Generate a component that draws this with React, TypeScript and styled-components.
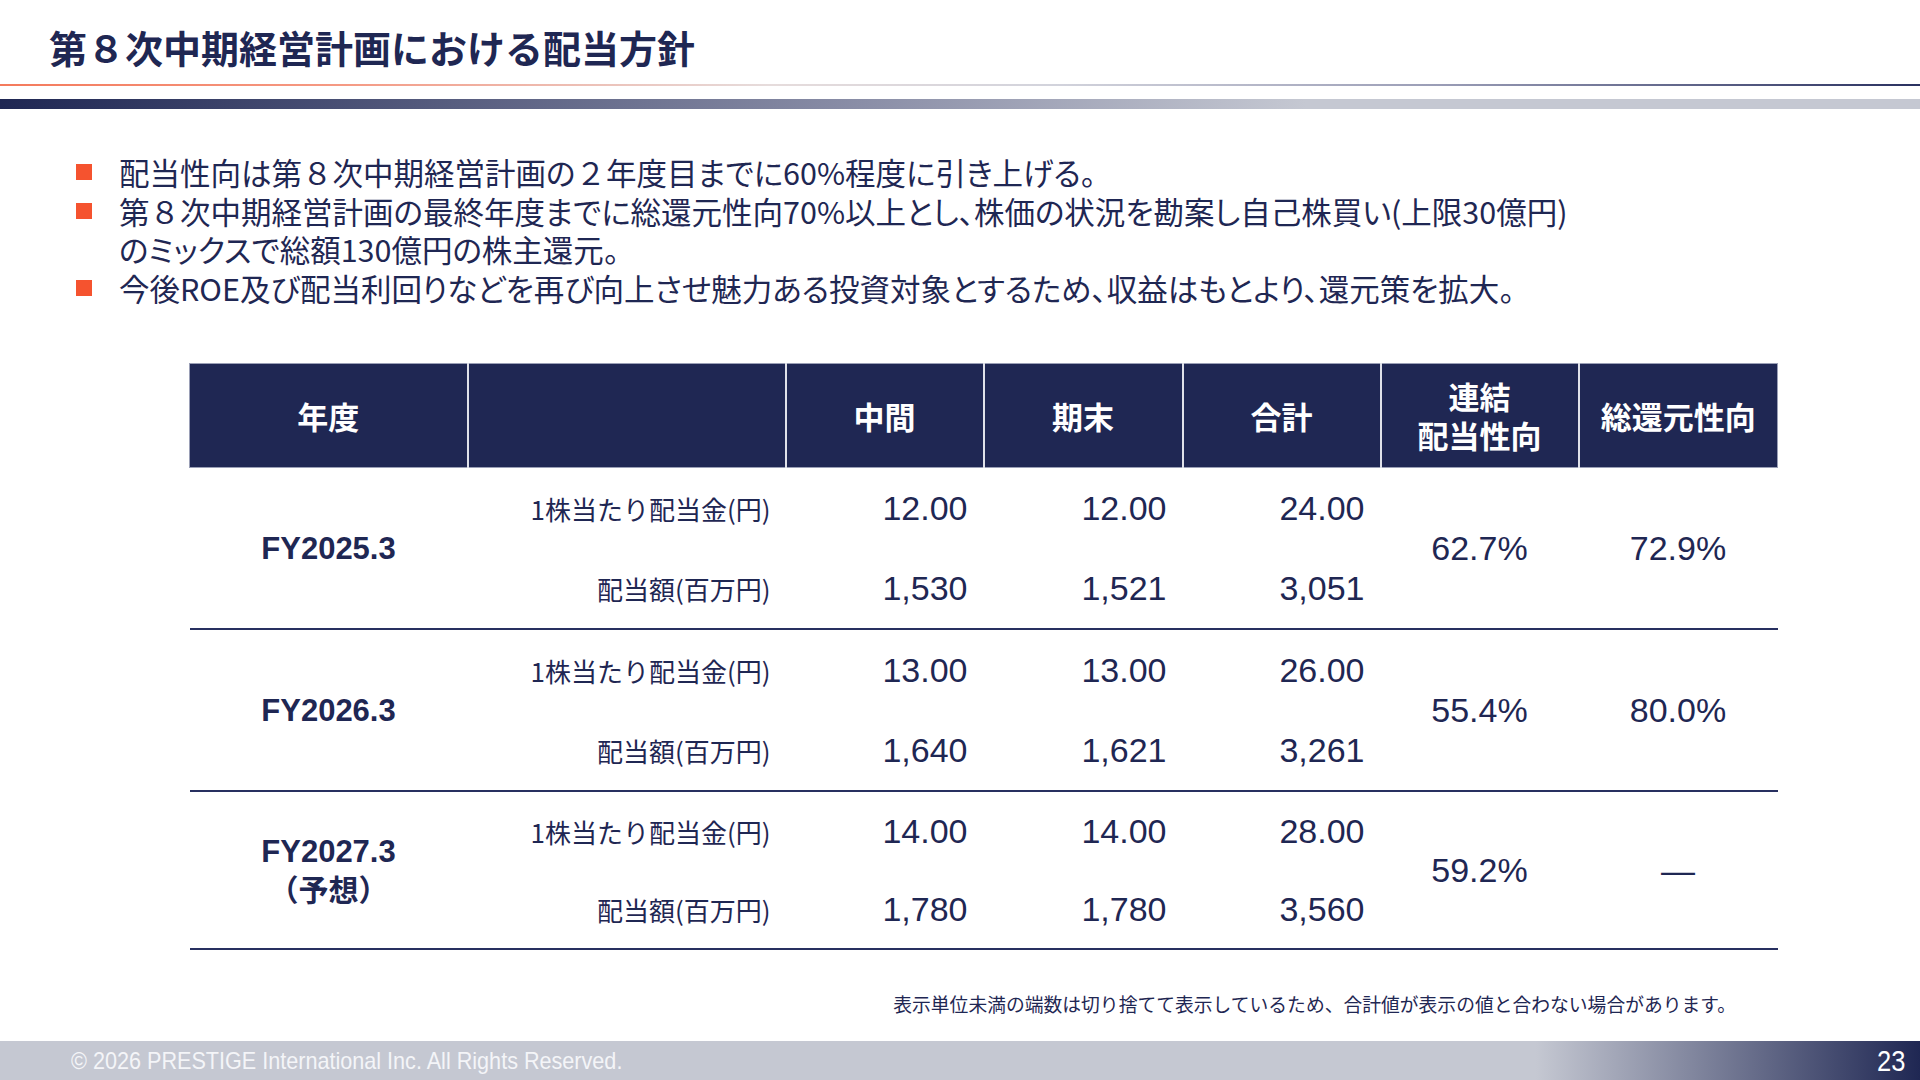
import React from "react";
import styled, { createGlobalStyle } from "styled-components";

const GlobalStyle = createGlobalStyle`
  html, body { margin: 0; padding: 0; background: #ffffff; }
  body { font-family: "Noto Sans CJK JP", "Noto Sans", sans-serif; }
  * { box-sizing: border-box; }
`;

const NAVY = "#1f2753";
const CJK = `"Noto Sans CJK JP", "Noto Sans", sans-serif`;
const LATIN = `"Liberation Sans", Arial, "Noto Sans CJK JP", sans-serif`;

const Page = styled.div`
  width: 1920px;
  height: 1080px;
  display: flex;
  flex-direction: column;
  background: #ffffff;
  overflow: hidden;
`;

const Header = styled.header`
  height: 84px;
  display: flex;
  align-items: center;
  padding: 10px 0 0 49px;
`;

const Title = styled.h1`
  margin: 0;
  font-family: ${CJK};
  font-weight: 700;
  font-size: 38px;
  line-height: 1;
  color: ${NAVY};
`;

const ThinRule = styled.div`
  height: 2px;
  background: linear-gradient(
    90deg,
    #f47a5c 0%,
    #f59a84 18%,
    #e6dcdc 40%,
    #d2d3dc 55%,
    #9a9db6 75%,
    #2a3160 100%
  );
`;

const Band = styled.div`
  height: 10px;
  margin-top: 13px;
  background: linear-gradient(90deg, ${NAVY} 0%, #8a8ea7 45%, #c5c8d2 68%, #c5c8d2 100%);
`;

const BulletList = styled.ul`
  list-style: none;
  margin: 44px 0 0 0;
  padding: 0 0 0 76px;
`;

const BulletItem = styled.li`
  display: grid;
  grid-template-columns: 43px 1fr;
  font-family: ${CJK};
  font-size: 30.5px;
  line-height: 38.7px;
  color: ${NAVY};
  font-feature-settings: "palt" 1;
`;

const WideDigit = styled.span`
  font-feature-settings: normal;
`;

const Square = styled.span`
  width: 16px;
  height: 16px;
  margin-top: 11px;
  background: #f5532f;
`;

const Table = styled.table`
  border-collapse: collapse;
  table-layout: fixed;
  width: 1588px;
  margin: 55px 0 0 189px;
`;

const HeadCell = styled.th`
  height: 104px;
  padding: 0;
  background: ${NAVY};
  color: #ffffff;
  font-family: ${CJK};
  font-weight: 700;
  font-size: 31px;
  line-height: 39px;
  text-align: center;
  vertical-align: middle;
  border: 1px solid #9a9fb6;
  & + & {
    border-left: 2px solid #dfe1e9;
  }
`;

const Group = styled.tbody`
  border-bottom: 2px solid #283060;
`;

const Row = styled.tr<{ $h: number }>`
  height: ${(p) => p.$h}px;
`;

const YearCell = styled.td`
  padding: 0;
  text-align: center;
  vertical-align: middle;
  font-family: ${LATIN};
  font-weight: 700;
  font-size: 31px;
  line-height: 37px;
  color: ${NAVY};
`;

const Forecast = styled.span`
  display: block;
  font-family: ${CJK};
  font-weight: 700;
  font-size: 30px;
`;

const LabelCell = styled.td`
  padding: 0 15px 0 0;
  text-align: right;
  vertical-align: middle;
  font-family: ${CJK};
  font-size: 26px;
  color: ${NAVY};
  white-space: nowrap;
`;

const NumCell = styled.td`
  padding: 0 16px 0 0;
  text-align: right;
  vertical-align: middle;
  font-family: ${LATIN};
  font-size: 34px;
  color: ${NAVY};
`;

const RatioCell = styled.td`
  padding: 0;
  text-align: center;
  vertical-align: middle;
  font-family: ${LATIN};
  font-size: 34px;
  color: ${NAVY};
`;

const Note = styled.p`
  width: 1588px;
  margin: 42px 0 0 189px;
  padding-right: 41px;
  text-align: right;
  font-family: ${CJK};
  font-size: 18.8px;
  line-height: 24px;
  color: ${NAVY};
`;

const Footer = styled.footer`
  margin-top: auto;
  height: 39px;
  display: flex;
  align-items: center;
  justify-content: space-between;
  padding: 0 15px 0 71px;
  background: linear-gradient(90deg, #c5c8d2 0%, #c5c8d2 80%, #1f2753 100%);
`;

const Copyright = styled.span`
  display: inline-block;
  font-family: ${LATIN};
  font-size: 24px;
  color: #f4f5f8;
  transform: scaleX(0.9);
  transform-origin: left center;
`;

const PageNo = styled.span`
  display: inline-block;
  font-family: ${LATIN};
  font-size: 30px;
  color: #ffffff;
  transform: scaleX(0.85);
  transform-origin: right center;
`;

type YearData = {
  year: string;
  forecast?: boolean;
  perShare: [string, string, string];
  total: [string, string, string];
  payout: string;
  totalReturn: string;
  h: number;
};

const data: YearData[] = [
  {
    year: "FY2025.3",
    perShare: ["12.00", "12.00", "24.00"],
    total: ["1,530", "1,521", "3,051"],
    payout: "62.7%",
    totalReturn: "72.9%",
    h: 81,
  },
  {
    year: "FY2026.3",
    perShare: ["13.00", "13.00", "26.00"],
    total: ["1,640", "1,621", "3,261"],
    payout: "55.4%",
    totalReturn: "80.0%",
    h: 81,
  },
  {
    year: "FY2027.3",
    forecast: true,
    perShare: ["14.00", "14.00", "28.00"],
    total: ["1,780", "1,780", "3,560"],
    payout: "59.2%",
    totalReturn: "—",
    h: 79,
  },
];

const colWidths = [278, 318, 198, 199, 198, 198, 199];

export default function App() {
  return (
    <>
      <GlobalStyle />
      <Page>
        <Header>
          <Title>第８次中期経営計画における配当方針</Title>
        </Header>
        <ThinRule />
        <Band />
        <BulletList>
          <BulletItem>
            <Square />
            <span>
              配当性向は第<WideDigit>８</WideDigit>次中期経営計画の<WideDigit>２</WideDigit>年度目までに60%程度に引き上げる。
            </span>
          </BulletItem>
          <BulletItem>
            <Square />
            <span>
              第<WideDigit>８</WideDigit>次中期経営計画の最終年度までに総還元性向70%以上とし、株価の状況を勘案し自己株買い(上限30億円)
              <br />
              のミックスで総額130億円の株主還元。
            </span>
          </BulletItem>
          <BulletItem>
            <Square />
            <span>今後ROE及び配当利回りなどを再び向上させ魅力ある投資対象とするため、収益はもとより、還元策を拡大。</span>
          </BulletItem>
        </BulletList>
        <Table>
          <colgroup>
            {colWidths.map((w, i) => (
              <col key={i} style={{ width: w }} />
            ))}
          </colgroup>
          <thead>
            <tr>
              <HeadCell>年度</HeadCell>
              <HeadCell />
              <HeadCell>中間</HeadCell>
              <HeadCell>期末</HeadCell>
              <HeadCell>合計</HeadCell>
              <HeadCell>
                連結
                <br />
                配当性向
              </HeadCell>
              <HeadCell>総還元性向</HeadCell>
            </tr>
          </thead>
          {data.map((d) => (
            <Group key={d.year}>
              <Row $h={d.h}>
                <YearCell rowSpan={2}>
                  {d.year}
                  {d.forecast && <Forecast>（予想）</Forecast>}
                </YearCell>
                <LabelCell>1株当たり配当金(円)</LabelCell>
                {d.perShare.map((v, i) => (
                  <NumCell key={i}>{v}</NumCell>
                ))}
                <RatioCell rowSpan={2}>{d.payout}</RatioCell>
                <RatioCell rowSpan={2}>{d.totalReturn}</RatioCell>
              </Row>
              <Row $h={d.h}>
                <LabelCell>配当額(百万円)</LabelCell>
                {d.total.map((v, i) => (
                  <NumCell key={i}>{v}</NumCell>
                ))}
              </Row>
            </Group>
          ))}
        </Table>
        <Note>表示単位未満の端数は切り捨てて表示しているため、合計値が表示の値と合わない場合があります。</Note>
        <Footer>
          <Copyright>© 2026 PRESTIGE International Inc. All Rights Reserved.</Copyright>
          <PageNo>23</PageNo>
        </Footer>
      </Page>
    </>
  );
}
